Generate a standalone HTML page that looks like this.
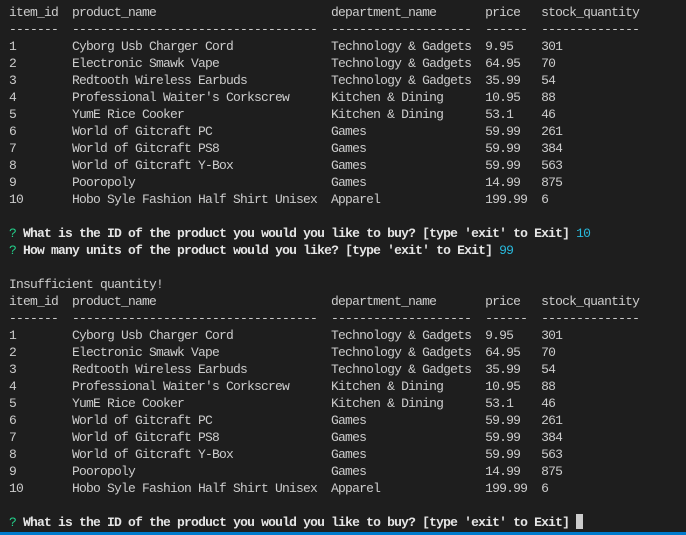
<!DOCTYPE html>
<html><head><meta charset="utf-8"><style>
html,body{margin:0;padding:0;background:#1e1e1e;width:686px;height:535px;overflow:hidden}
pre{position:absolute;left:9px;top:4px;margin:0;font-family:"Liberation Mono",monospace;font-size:13px;letter-spacing:-0.8px;line-height:17px;color:#cccccc;white-space:pre}
.g{color:#23d18b}.c{color:#29b8db}b{font-weight:bold;color:#e5e5e5}
.cur{display:inline-block;width:7px;height:15px;background:#cccccc;vertical-align:-3px}
.bar{position:absolute;left:0;bottom:0;width:686px;height:3px;background:#007acc}
</style></head><body>
<pre>item_id  product_name                         department_name       price   stock_quantity
-------  -----------------------------------  --------------------  ------  --------------
1        Cyborg Usb Charger Cord              Technology &amp; Gadgets  9.95    301
2        Electronic Smawk Vape                Technology &amp; Gadgets  64.95   70
3        Redtooth Wireless Earbuds            Technology &amp; Gadgets  35.99   54
4        Professional Waiter's Corkscrew      Kitchen &amp; Dining      10.95   88
5        YumE Rice Cooker                     Kitchen &amp; Dining      53.1    46
6        World of Gitcraft PC                 Games                 59.99   261
7        World of Gitcraft PS8                Games                 59.99   384
8        World of Gitcraft Y-Box              Games                 59.99   563
9        Pooropoly                            Games                 14.99   875
10       Hobo Syle Fashion Half Shirt Unisex  Apparel               199.99  6

<span class="g">?</span> <b>What is the ID of the product you would you like to buy? [type 'exit' to Exit]</b> <span class="c">10</span>
<span class="g">?</span> <b>How many units of the product would you like? [type 'exit' to Exit]</b> <span class="c">99</span>

Insufficient quantity!
item_id  product_name                         department_name       price   stock_quantity
-------  -----------------------------------  --------------------  ------  --------------
1        Cyborg Usb Charger Cord              Technology &amp; Gadgets  9.95    301
2        Electronic Smawk Vape                Technology &amp; Gadgets  64.95   70
3        Redtooth Wireless Earbuds            Technology &amp; Gadgets  35.99   54
4        Professional Waiter's Corkscrew      Kitchen &amp; Dining      10.95   88
5        YumE Rice Cooker                     Kitchen &amp; Dining      53.1    46
6        World of Gitcraft PC                 Games                 59.99   261
7        World of Gitcraft PS8                Games                 59.99   384
8        World of Gitcraft Y-Box              Games                 59.99   563
9        Pooropoly                            Games                 14.99   875
10       Hobo Syle Fashion Half Shirt Unisex  Apparel               199.99  6

<span class="g">?</span> <b>What is the ID of the product you would you like to buy? [type 'exit' to Exit]</b> <span class="cur"></span></pre>
<div class="bar"></div>
</body></html>
